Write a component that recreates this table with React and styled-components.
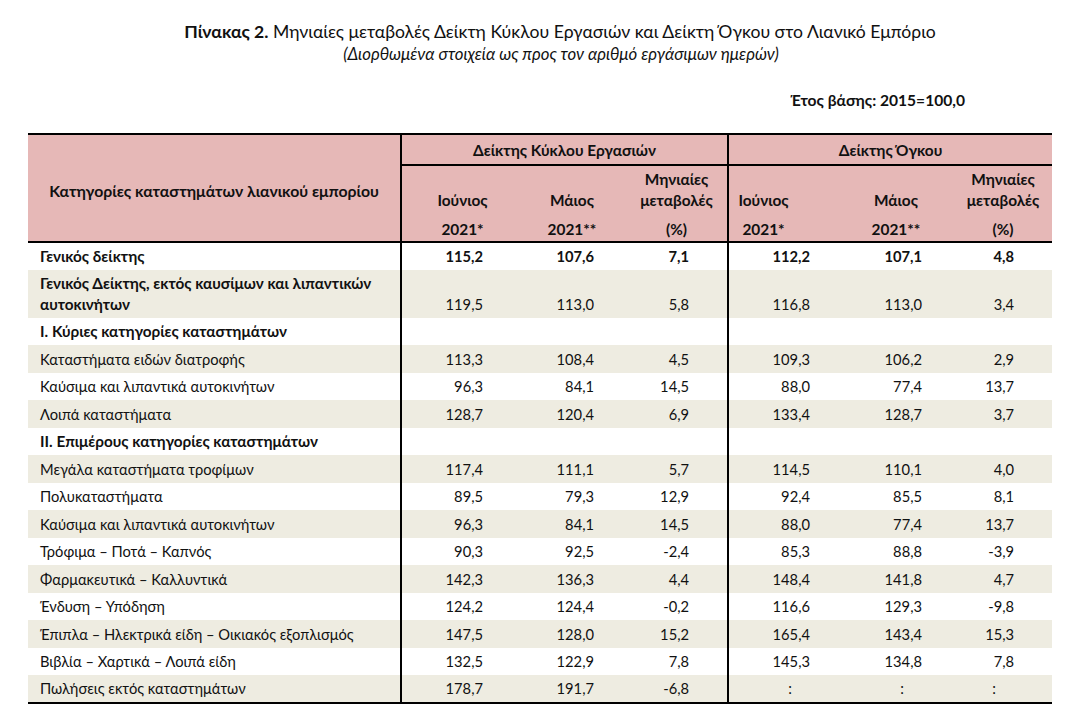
import React from 'react'
import styled, { createGlobalStyle } from 'styled-components'

const GlobalStyle = createGlobalStyle`
  body {
    margin: 0;
    background: #fff;
    font-family: Lato, "Open Sans", "Noto Sans", sans-serif;
    color: #111;
  }
`

const Page = styled.div`
  width: 1024px;
  margin-left: 28px;
  padding-top: 21px;
`

const Title = styled.div`
  padding-left: 40px;
  text-align: center;
  font-size: 17.6px;
  line-height: 22px;
  & b { font-weight: 700; }
`

const Subtitle = styled.div`
  padding-left: 42px;
  margin-top: 2px;
  text-align: center;
  font-size: 16.8px;
  line-height: 18px;
  font-style: italic;
`

const BaseYear = styled.div`
  margin-top: 27px;
  padding-right: 87px;
  text-align: right;
  font-size: 15.6px;
  line-height: 20px;
  font-weight: 700;
`

const Table = styled.table`
  margin-top: 23px;
  width: 1024px;
  table-layout: fixed;
  border-collapse: collapse;
  font-size: 14.7px;
  border-top: 2px solid #000;
  border-bottom: 2px solid #000;
`

const Th = styled.th`
  background: #e6b8b7;
  font-weight: 700;
  font-size: 15.4px;
  padding: 0;
  padding-right: ${({pr}) => pr || 0}px;
  text-align: center;
  border-left: ${({divide}) => divide ? '2px solid #000' : 'none'};
`

const GroupTh = styled(Th)`
  height: 29px;
  border-bottom: 2px solid #000;
`

const CornerTh = styled(Th)`
  font-size: 15.8px;
  border-bottom: 2px solid #000;
  padding-top: 4px;
`

const SubTh = styled(Th)`
  vertical-align: bottom;
  border-bottom: 2px solid #000;
`

const SubStack = styled.div`
  display: flex;
  flex-direction: column;
  height: 75px;
`

const SubTop = styled.div`
  flex: 1;
  display: flex;
  flex-direction: column;
  justify-content: flex-end;
  line-height: 21px;
  padding-bottom: 6px;
`

const SubBottom = styled.div`
  height: 24px;
  line-height: 24px;
`

const Row = styled.tr`
  height: ${({tall}) => tall ? 48 : 27.5}px;
  background: ${({shade}) => shade ? '#eeece1' : '#fff'};
`

const Label = styled.td`
  padding: 0 0 3px 12px;
  line-height: 21px;
  vertical-align: bottom;
  font-weight: ${({bold}) => bold ? 700 : 400};
  font-size: ${({bold}) => bold ? 15.3 : 14.7}px;
`

const Num = styled.td`
  padding: 0 ${({pr}) => pr}px 3px 0;
  line-height: 21px;
  vertical-align: bottom;
  text-align: right;
  font-weight: ${({bold}) => bold ? 700 : 400};
  border-left: ${({divide}) => divide ? '2px solid #000' : 'none'};
`

const widths = [373, 122, 107, 98, 120, 109, 95]
const numPad = [40, 36, 38, 38, 35, 38]
const headPad = [0, 9, 4, 50, 13, 3]

const subHeads = [
  { top: ['Ιούνιος'], year: '2021*' },
  { top: ['Μάιος'], year: '2021**' },
  { top: ['Μηνιαίες', 'μεταβολές'], year: '(%)' },
  { top: ['Ιούνιος'], year: '2021*' },
  { top: ['Μάιος'], year: '2021**' },
  { top: ['Μηνιαίες', 'μεταβολές'], year: '(%)' },
]

const rows = [
  { label: 'Γενικός δείκτης', bold: true, boldNums: true, v: ['115,2', '107,6', '7,1', '112,2', '107,1', '4,8'] },
  { label: 'Γενικός Δείκτης, εκτός καυσίμων και λιπαντικών αυτοκινήτων', bold: true, tall: true, v: ['119,5', '113,0', '5,8', '116,8', '113,0', '3,4'] },
  { label: 'I. Κύριες κατηγορίες καταστημάτων', bold: true, v: [] },
  { label: 'Καταστήματα ειδών διατροφής', v: ['113,3', '108,4', '4,5', '109,3', '106,2', '2,9'] },
  { label: 'Καύσιμα και λιπαντικά αυτοκινήτων', v: ['96,3', '84,1', '14,5', '88,0', '77,4', '13,7'] },
  { label: 'Λοιπά καταστήματα', v: ['128,7', '120,4', '6,9', '133,4', '128,7', '3,7'] },
  { label: 'II. Επιμέρους κατηγορίες καταστημάτων', bold: true, v: [] },
  { label: 'Μεγάλα καταστήματα τροφίμων', v: ['117,4', '111,1', '5,7', '114,5', '110,1', '4,0'] },
  { label: 'Πολυκαταστήματα', v: ['89,5', '79,3', '12,9', '92,4', '85,5', '8,1'] },
  { label: 'Καύσιμα και λιπαντικά αυτοκινήτων', v: ['96,3', '84,1', '14,5', '88,0', '77,4', '13,7'] },
  { label: 'Τρόφιμα – Ποτά – Καπνός', v: ['90,3', '92,5', '-2,4', '85,3', '88,8', '-3,9'] },
  { label: 'Φαρμακευτικά – Καλλυντικά', v: ['142,3', '136,3', '4,4', '148,4', '141,8', '4,7'] },
  { label: 'Ένδυση – Υπόδηση', v: ['124,2', '124,4', '-0,2', '116,6', '129,3', '-9,8'] },
  { label: 'Έπιπλα – Ηλεκτρικά είδη – Οικιακός εξοπλισμός', v: ['147,5', '128,0', '15,2', '165,4', '143,4', '15,3'] },
  { label: 'Βιβλία – Χαρτικά – Λοιπά είδη', v: ['132,5', '122,9', '7,8', '145,3', '134,8', '7,8'] },
  { label: 'Πωλήσεις εκτός καταστημάτων', v: ['178,7', '191,7', '-6,8', ':', ':', ':'] },
]

export default function App() {
  return (
    <Page>
      <GlobalStyle />
      <Title>
        <b>Πίνακας 2.</b> Μηνιαίες μεταβολές Δείκτη Κύκλου Εργασιών και Δείκτη Όγκου στο Λιανικό Εμπόριο
      </Title>
      <Subtitle>(Διορθωμένα στοιχεία ως προς τον αριθμό εργάσιμων ημερών)</Subtitle>
      <BaseYear>Έτος βάσης: 2015=100,0</BaseYear>
      <Table>
        <colgroup>
          {widths.map((w, i) => <col key={i} style={{ width: w }} />)}
        </colgroup>
        <thead>
          <tr>
            <CornerTh rowSpan={2}>Κατηγορίες καταστημάτων λιανικού εμπορίου</CornerTh>
            <GroupTh colSpan={3} divide>Δείκτης Κύκλου Εργασιών</GroupTh>
            <GroupTh colSpan={3} divide>Δείκτης Όγκου</GroupTh>
          </tr>
          <tr>
            {subHeads.map((h, i) => (
              <SubTh key={i} pr={headPad[i]} divide={i === 0 || i === 3}>
                <SubStack>
                  <SubTop>
                    {h.top.map(t => <div key={t}>{t}</div>)}
                  </SubTop>
                  <SubBottom>{h.year}</SubBottom>
                </SubStack>
              </SubTh>
            ))}
          </tr>
        </thead>
        <tbody>
          {rows.map((r, idx) => (
            <Row key={idx} shade={idx % 2 === 1} tall={r.tall}>
              <Label bold={r.bold}>{r.label}</Label>
              {Array(6).fill().map((_, i) => {
                const val = r.v[i] || ''
                const pad = val === ':' ? numPad[i] + 18 : numPad[i]
                return (
                  <Num key={i} pr={pad} bold={r.boldNums} divide={i === 0 || i === 3}>
                    {val}
                  </Num>
                )
              })}
            </Row>
          ))}
        </tbody>
      </Table>
    </Page>
  )
}
